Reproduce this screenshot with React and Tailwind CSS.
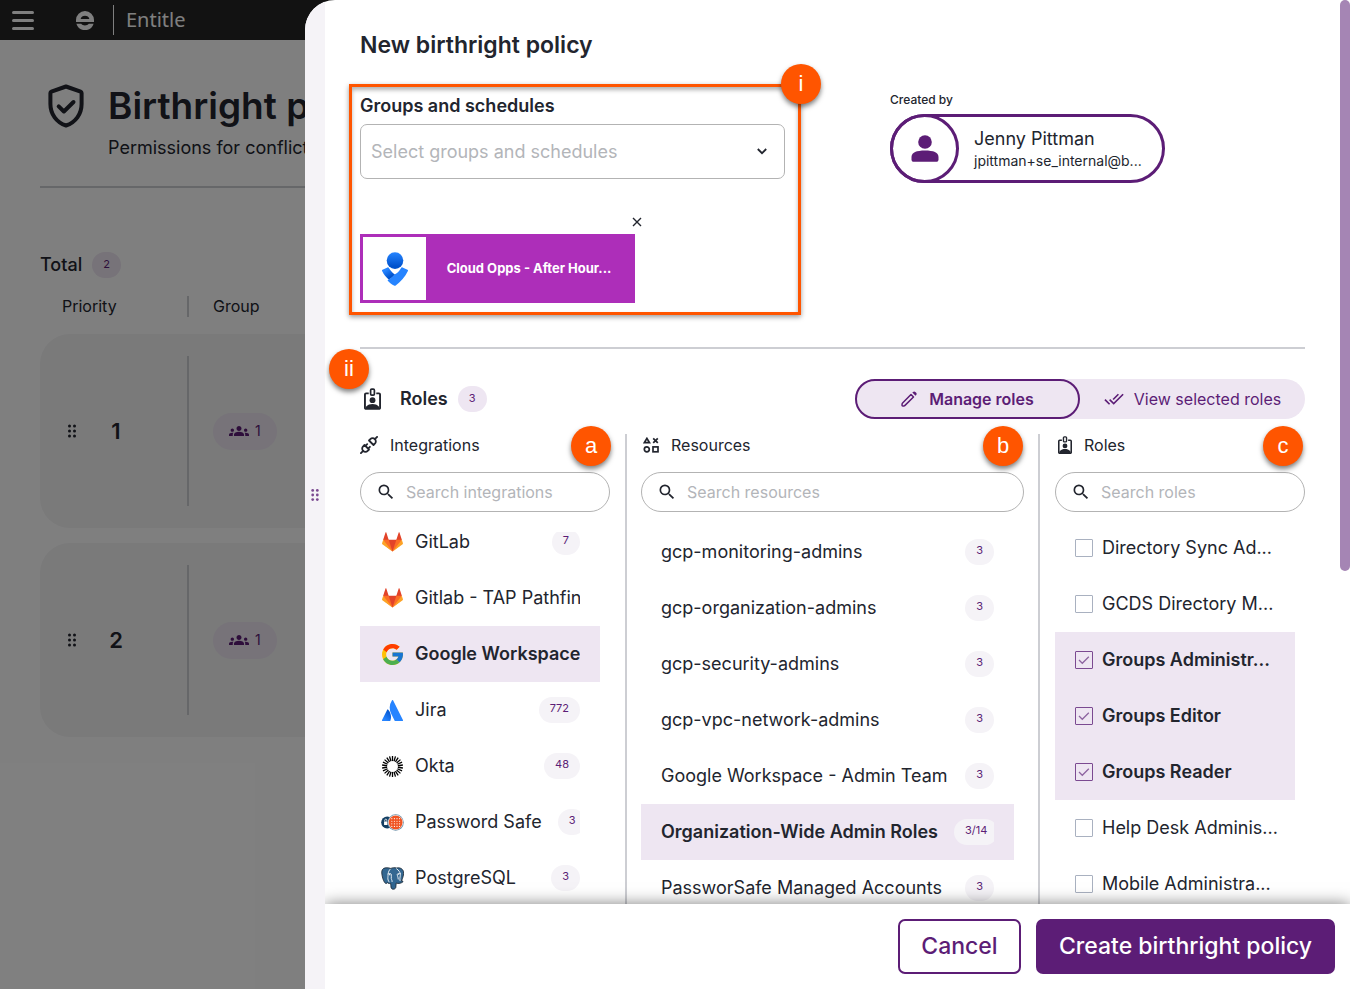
import { useState } from 'react';
import clsx from 'clsx';
import { MdDoneAll, MdGroups, MdSearch } from 'react-icons/md';
import { FcGoogle } from 'react-icons/fc';

const integrations = [
  { name: 'GitLab', count: '7', icon: GitlabLogo },
  { name: 'Gitlab - TAP Pathfin', icon: GitlabLogo },
  { name: 'Google Workspace', icon: GoogleLogo, active: true },
  { name: 'Jira', count: '772', icon: AtlassianLogo },
  { name: 'Okta', count: '48', icon: OktaLogo },
  { name: 'Password Safe', count: '3', icon: PasswordSafeLogo },
  { name: 'PostgreSQL', count: '3', icon: PostgresLogo }
];

const resources = [
  { name: 'gcp-monitoring-admins', count: '3' },
  { name: 'gcp-organization-admins', count: '3' },
  { name: 'gcp-security-admins', count: '3' },
  { name: 'gcp-vpc-network-admins', count: '3' },
  { name: 'Google Workspace - Admin Team', count: '3' },
  { name: 'Organization-Wide Admin Roles', count: '3/14', active: true },
  { name: 'PassworSafe Managed Accounts', count: '3' }
];

const roleNames = [
  'Directory Sync Ad...',
  'GCDS Directory M...',
  'Groups Administr...',
  'Groups Editor',
  'Groups Reader',
  'Help Desk Adminis...',
  'Mobile Administra...'
];

function GitlabLogo() {
  return (
    <svg viewBox="0 1 36 34" className="h-[20px] w-[21px] shrink-0">
      <path fill="#e24329" d="M2 14l9.38 9v-9l-4-12.28c-.205-.632-1.176-.632-1.38 0z" />
      <path fill="#e24329" d="M34 14l-9.38 9v-9l4-12.28c.205-.632 1.176-.632 1.38 0z" />
      <path fill="#e24329" d="M18 34.38L3 14h30z" />
      <path fill="#fc6d26" d="M18 34.38L11.38 14H2l4 11z" />
      <path fill="#fc6d26" d="M18 34.38L24.62 14H34l-4 11z" />
      <path fill="#fca326" d="M2 14L.1 20.16c-.18.565 0 1.2.5 1.56l17.42 12.66z" />
      <path fill="#fca326" d="M34 14l1.9 6.16c.18.565 0 1.2-.5 1.56L18 34.38z" />
    </svg>
  );
}

function GoogleLogo() {
  return <FcGoogle viewBox="4 4 40 40" className="size-[21px] shrink-0" />;
}

function AtlassianLogo() {
  return (
    <svg viewBox="0 0 24 24" className="size-[21px] shrink-0">
      <defs>
        <linearGradient id="atl" x1="0.9" y1="0.1" x2="0.3" y2="1">
          <stop offset="0" stopColor="#0052cc" />
          <stop offset="0.9" stopColor="#2684ff" />
        </linearGradient>
      </defs>
      <path
        fill="url(#atl)"
        d="M7.12 11.084a.683.683 0 00-1.16.126L.075 22.974a.703.703 0 00.63 1.018h8.19a.678.678 0 00.63-.39c1.767-3.65.696-9.203-2.406-12.52z"
      />
      <path
        fill="#2684ff"
        d="M11.434.386a15.515 15.515 0 00-.906 15.317l3.95 7.9a.703.703 0 00.628.388h8.19a.703.703 0 00.63-1.017L12.63.38a.664.664 0 00-1.196.006z"
      />
    </svg>
  );
}

function OktaLogo() {
  const rays = Array.from({ length: 22 }, (_, i) => (i * 360) / 22);

  return (
    <svg viewBox="0 0 24 24" className="size-[21px] shrink-0" stroke="#000" strokeWidth="1.5">
      {rays.map((angle) => (
        <path key={angle} d="M12 0v5.800" transform={`rotate(${angle} 12 12)`} />
      ))}
    </svg>
  );
}

function PasswordSafeLogo() {
  return (
    <svg viewBox="0 0 24 24" className="size-[23px] -mx-px shrink-0">
      <circle cx="6.5" cy="12" r="6.3" fill="#143f63" />
      <rect x="3.2" y="11" width="3.6" height="3.6" rx="0.6" fill="#fff" />
      <path d="M3.9 11V9.600a1.100 1.100 0 0 1 2.200 0V11" fill="none" stroke="#fff" strokeWidth="0.800" />
      <circle cx="15.3" cy="12" r="8.5" fill="#6f93ab" />
      <circle cx="15.3" cy="12" r="7.7" fill="#fff" />
      <circle cx="15.3" cy="12" r="7.2" fill="#f05423" />
      {[8, 10.7, 13.4, 16.1].map((y) =>
        [11.3, 14, 16.7, 19.4].map((x) => <circle key={`${x}-${y}`} cx={x} cy={y} r="0.6" fill="#fff" />)
      )}
    </svg>
  );
}

function PostgresLogo() {
  return (
    <svg viewBox="0 0 24 24" className="size-[23px] -mx-px shrink-0">
      <path
        fill="#336791"
        stroke="#1d2a36"
        strokeWidth="0.9"
        strokeLinejoin="round"
        d="M4.5.9C1.700 1.300.6 3.400.8 6.300c.2 3.300 1.500 7.800 3 9.900 1 1.300 2.100 1.200 3 .2.400.700 1.500 1 3.300.7.300 1.300 0 3.300.5 4.700.7 1.900 4.100 1.900 4.800-.3.400-1.500.2-3.300.4-4.700 2.300.8 5.600.2 7.200-1.500.3-.5-.400-.800-1.700-.7 1.500-2.900 2.700-7.100 2.200-9.700C22.700 1.500 19.200.3 16.400 1.100 14.400.5 12 .6 10.300 1.500 8.700.9 6.600.6 4.500.9z"
      />
      <path
        fill="none"
        stroke="#fff"
        strokeWidth="0.9"
        strokeLinecap="round"
        d="M9.600 2.300C6.900 4.700 7.500 8.500 7.200 11.200c-.2 1.700.4 3.200 1.200 4.300M7.300 7.200c1-.5 2.800-.7 3.300.2.500 1.400-.1 3.200.1 4.600.2 1.200 1 1.700.9 3.200M16.300 1.800c2.400 1.700 3.800 4 3.900 5.700.1 2-.8 3.400-.4 6.700M20 6.800c-1.200-.3-2.700-.1-3 .8-.2 1.300 1 3 1 5"
      />
      <circle cx="9" cy="8" r="0.700" fill="#fff" />
      <circle cx="18.500" cy="7.800" r="0.600" fill="#fff" />
    </svg>
  );
}

function OpsgenieLogo() {
  return (
    <svg viewBox="0 0 26 34" className="h-[34px] w-[26px]">
      <defs>
        <linearGradient id="ogHead" x1="0" y1="0" x2="0" y2="1">
          <stop offset="0" stopColor="#2684ff" />
          <stop offset="0.85" stopColor="#0052cc" />
        </linearGradient>
        <linearGradient id="ogArm" x1="0" y1="0" x2="0.7" y2="1">
          <stop offset="0.300" stopColor="#2684ff" />
          <stop offset="0.8" stopColor="#0052cc" />
        </linearGradient>
      </defs>
      <path
        fill="url(#ogArm)"
        d="M.1 19.100c-.3-.6-.2-1 .4-1.300l5-2.300c.6-.3 1-.2 1.400.4 1.400 2.400 3.500 5 6.100 6.700-1.300 1.600-3.700 3.700-5.900 5.500C4 25.200 1.700 22.400.1 19.100z"
      />
      <path
        fill="#2684ff"
        d="M12.500 33.800c-2.800-1.500-5-3.300-7-5.400 2.500-1.600 5.200-3.600 7.500-6.100 3-1.700 4.700-4.100 6.100-6.400.4-.6.8-.7 1.400-.4l5 2.300c.6.300.7.7.4 1.300-2.800 5.700-7 11-12.500 14.600-.4.200-.6.200-.9.100z"
      />
      <circle cx="13" cy="8.600" r="8.300" fill="url(#ogHead)" />
    </svg>
  );
}

function RoleBadgeIcon({ className }) {
  return (
    <svg viewBox="0 0 18 23" className={className} fill="none" stroke="#22252e" strokeWidth="2">
      <path d="M5 5.500H2.200A1.200 1.200 0 0 0 1 6.700v14A1.200 1.200 0 0 0 2.200 22h13.600a1.200 1.200 0 0 0 1.200-1.300v-14a1.200 1.200 0 0 0-1.200-1.200H13" />
      <rect x="7" y="1" width="4" height="6.500" rx="1.200" strokeWidth="1.800" />
      <circle cx="9" cy="12.700" r="3.100" fill="#22252e" stroke="none" />
      <path d="M2 22v-2.400c2-2 4.500-2.800 7-2.800s5 .8 7 2.800V22z" fill="#22252e" stroke="none" />
    </svg>
  );
}

function PlugIcon() {
  return (
    <svg
      viewBox="2 2 20 20"
      className="size-[18px]"
      fill="none"
      stroke="#22252e"
      strokeWidth="2"
      strokeLinecap="round"
      strokeLinejoin="round"
    >
      <path d="M7 12l5 5l-1.500 1.500a3.536 3.536 0 1 1 -5 -5l1.500 -1.500z" />
      <path d="M17 12l-5 -5l1.500 -1.500a3.536 3.536 0 1 1 5 5l-1.500 1.500z" />
      <path d="M3 21l2.500 -2.500M18.500 5.500l2.500 -2.500M10 11l-2 2M13 14l-2 2" />
    </svg>
  );
}

function ShapesIcon() {
  return (
    <svg viewBox="0 0 16 16" className="size-[16px]" fill="none" stroke="#22252e" strokeWidth="1.700">
      <path d="M1.300 5.700L3.900 1.400L6.500 5.700z" />
      <path d="M10.200 1.300l4.600 4.600M14.800 1.300l-4.600 4.600" />
      <circle cx="3.800" cy="12.300" r="2.500" />
      <rect x="10" y="9.900" width="5" height="4.900" />
    </svg>
  );
}

function PencilIcon() {
  return (
    <svg viewBox="0 0 16 16" className="size-4" fill="none" stroke="#5c1d76" strokeWidth="1.500">
      <path
        d="M10 3.500L1.600 12c-.3.300-.5.700-.5 1.100l-.1 1.200c0 .4.300.7.700.7l1.200-.1c.4 0 .8-.2 1.100-.5L12.500 6z"
        strokeLinejoin="round"
      />
      <path d="M11.300 1.600l.7-.7c.7-.7 1.700-.7 2.300 0l.9.900c.6.600.6 1.600 0 2.300l-.7.700z" fill="#5c1d76" stroke="none" />
    </svg>
  );
}

function DragDots({ className }) {
  return (
    <svg viewBox="0 0 8 13" className={className} fill="currentColor">
      {[1.5, 6.5, 11.5].map((y) => (
        <g key={y}>
          <circle cx="1.500" cy={y} r="1.500" />
          <circle cx="6.500" cy={y} r="1.500" />
        </g>
      ))}
    </svg>
  );
}

// numbered callout bubble
function Callout({ className, children }) {
  return (
    <span
      className={clsx(
        'absolute z-10 flex size-10 items-center justify-center rounded-full bg-[#ff5500] font-[Liberation_Sans,sans-serif] text-[22px] leading-none text-white shadow-[0_3px_5px_rgba(0,0,0,0.5)]',
        className
      )}
    >
      {children}
    </span>
  );
}

function CountBadge({ className, children }) {
  return (
    <span
      className={clsx(
        'flex h-[26px] min-w-[28px] shrink-0 items-center justify-center rounded-full px-[11px] pb-[2px] text-[11px] text-[#5c1d76]',
        className
      )}
    >
      {children}
    </span>
  );
}

function SearchField({ id, placeholder }) {
  return (
    <div className="flex h-10 items-center gap-[10px] rounded-full border border-[#b3b3b3] px-[15px]">
      <label htmlFor={id} aria-label={placeholder}>
        <MdSearch className="size-5 text-[#22252e]" />
      </label>
      <input
        id={id}
        type="text"
        placeholder={placeholder}
        className="w-full min-w-0 bg-transparent text-base outline-none placeholder:text-[#b3b5b9]"
      />
    </div>
  );
}

function PolicyRow({ priority }) {
  return (
    <div className="flex h-[194px] items-stretch rounded-[30px] bg-[#f4f4f5] py-[22px]">
      <div className="flex w-[147px] items-center pl-7">
        <DragDots className="h-[14px] w-2" />
        <span className="w-20 text-center text-[22px] font-semibold">{priority}</span>
      </div>
      <div className="w-[2px] bg-[#cdced3]" />
      <div className="flex items-center pl-6">
        <span className="flex h-[37px] items-center gap-[6px] rounded-full bg-[#eee6f2] px-4 text-sm text-[#5c1d76]">
          <MdGroups className="size-5" />
          1
        </span>
      </div>
    </div>
  );
}

function PoliciesPage() {
  return (
    <div className="h-full bg-white text-[#22252e]">
      <header className="flex h-10 items-center bg-[#242424] pl-3">
        <button type="button" aria-label="Menu" className="flex w-[22px] flex-col gap-[5px]">
          <span className="h-[3px] w-full rounded-full bg-white" />
          <span className="h-[3px] w-full rounded-full bg-white" />
          <span className="h-[3px] w-full rounded-full bg-white" />
        </button>
        <svg viewBox="0 0 18 19" className="ml-[42px] mr-[19px] h-[19px] w-[18px]">
          <path
            fill="#fff"
            fillRule="evenodd"
            d="M0 11V9a9 9 0 0 1 18 0v2zM4.600 8h8.800a4.600 4.600 0 0 0-8.800 0z"
          />
          <path fill="#fff" d="M.4 12.800h4.800c1.600 2.200 5.800 2.200 7.600 0h4.800a9 9 0 0 1-17.200 0z" />
        </svg>
        <div className="h-[30px] w-px bg-white" />
        <span className="pl-3 font-[Noto_Sans,sans-serif] text-xl text-white">Entitle</span>
      </header>

      <div className="whitespace-nowrap pl-10 pt-10">
        <div className="flex items-start gap-6 border-b-2 border-[#cdced3] pb-[22px] pl-2">
          <svg
            viewBox="0 0 36 44"
            className="mt-1 h-11 w-9"
            fill="none"
            stroke="#22252e"
            strokeWidth="4"
            strokeLinecap="round"
            strokeLinejoin="round"
          >
            <path d="M18 2.500L3.400 7.700a1.500 1.500 0 0 0-1 1.400V20c0 10 6 18.500 15.600 21.500C27.600 38.500 33.600 30 33.600 20V9.100a1.500 1.500 0 0 0-1-1.400z" />
            <path d="M10.700 22.300l5.200 5.200L25.500 18" />
          </svg>
          <div>
            <h1 className="text-[37px] font-semibold leading-[52px]">Birthright p</h1>
            <p className="text-lg leading-8">Permissions for conflict</p>
          </div>
        </div>

        <div className="flex items-center gap-[10px] pt-16 text-lg leading-[26px] font-medium">
          Total
          <CountBadge className="bg-[#eee6f2] font-normal">2</CountBadge>
        </div>
        <div className="flex items-center py-4 text-base">
          <span className="w-[147px] pl-[22px]">Priority</span>
          <span className="h-[21px] w-[2px] bg-[#cdced3]" />
          <span className="pl-6">Group</span>
        </div>
        <div className="flex flex-col gap-[15px]">
          <PolicyRow priority="1" />
          <PolicyRow priority="2" />
        </div>
      </div>
    </div>
  );
}

function GroupsField() {
  return (
    <div className="relative w-[425px] shrink-0">
      <div className="pointer-events-none absolute -bottom-3 -left-[11px] -right-4 -top-[10px] border-[3px] border-[#ff5500] shadow-[0_2px_5px_rgba(0,0,0,0.4),inset_0_3px_4px_rgba(0,0,0,0.3)]" />
      <Callout className="-right-9 -top-[30px]">i</Callout>

      <label htmlFor="groups" className="block text-lg font-semibold leading-6">
        Groups and schedules
      </label>
      <div className="relative mt-[6px]">
        <select
          id="groups"
          defaultValue=""
          className="h-[55px] w-full appearance-none rounded-[7px] border border-[#b3b3b3] bg-white px-[10px] text-lg text-[#b3b5b9] outline-none"
        >
          <option value="">Select groups and schedules</option>
        </select>
        <svg
          viewBox="0 0 10 7"
          className="pointer-events-none absolute right-[18px] top-6 h-[7px] w-[10px]"
          fill="none"
          stroke="#22252e"
          strokeWidth="1.800"
        >
          <path d="M.8 1l4.200 4.200L9.200 1" />
        </svg>
      </div>

      <div className="mt-[38px] flex w-[282px] justify-end">
        <button type="button" aria-label="Remove group" className="flex h-[17px] items-start">
          <svg viewBox="0 0 10 10" className="size-[10px]" stroke="#22252e" strokeWidth="1.400">
            <path d="M1 1l8 8M9 1L1 9" />
          </svg>
        </button>
      </div>
      <div className="flex h-[69px] w-[275px] items-center border-[3px] border-[#ad2eb9] bg-[#ad2eb9]">
        <div className="flex size-[63px] shrink-0 items-center justify-center bg-white">
          <OpsgenieLogo />
        </div>
        <span className="flex-1 whitespace-nowrap text-center text-[13px] font-bold text-white">
          Cloud Opps - After Hour...
        </span>
      </div>
    </div>
  );
}

function CreatedBy() {
  return (
    <div className="w-[275px]">
      <p className="text-xs font-medium leading-4">Created by</p>
      <div className="mt-[6px] flex h-[69px] items-center rounded-full border-[3px] border-[#5c1d76]">
        <div className="-ml-[3px] flex size-[69px] shrink-0 items-center justify-center rounded-full border-[3px] border-[#5c1d76]">
          <svg viewBox="0 0 28 27" className="h-[27px] w-7" fill="#5c1d76">
            <circle cx="14" cy="7" r="6.800" />
            <path d="M.5 22c0-4.500 5-6.500 13.500-6.500s13.500 2 13.500 6.500v2.500c0 1.400-.9 2.300-2.300 2.300H2.800C1.400 26.800.5 25.900.5 24.500z" />
          </svg>
        </div>
        <div className="pl-[15px]">
          <p className="text-lg leading-6">Jenny Pittman</p>
          <p className="text-sm leading-5">jpittman+se_internal@b...</p>
        </div>
      </div>
    </div>
  );
}

function RolesPicker() {
  const [selected, setSelected] = useState(['Groups Administr...', 'Groups Editor', 'Groups Reader']);

  const toggle = (name) => {
    setSelected(selected.includes(name) ? selected.filter((n) => n !== name) : [...selected, name]);
  };

  return (
    <div className="mt-[15px] flex">
      <section className="relative w-[267px] shrink-0 border-r-2 border-[#cdced3] pr-[15px]">
        <h3 className="flex h-[22px] items-center gap-3 text-base">
          <PlugIcon />
          Integrations
        </h3>
        <Callout className="-top-2 right-[14px]">a</Callout>
        <div className="mt-4">
          <SearchField id="search-integrations" placeholder="Search integrations" />
        </div>
        <div className="mt-5 overflow-hidden">
          {/* list is scrolled down a little */}
          <ul className="-mt-[18px] w-60">
            {integrations.map(({ name, count, icon: Icon, active }) => (
              <li key={name} className={clsx('h-14 px-5', active && 'bg-[#eee6f2] font-semibold')}>
                <div className="flex h-full items-center overflow-hidden whitespace-nowrap pl-[2px] text-lg">
                  <Icon />
                  <span className="ml-3 mr-4">{name}</span>
                  {count && <CountBadge className="ml-auto bg-[#f5f3f7]">{count}</CountBadge>}
                </div>
              </li>
            ))}
          </ul>
        </div>
      </section>

      <section className="relative min-w-0 flex-1 border-r-2 border-[#cdced3] px-[14px]">
        <h3 className="flex h-[22px] items-center gap-3 pl-[2px] text-base">
          <ShapesIcon />
          Resources
        </h3>
        <Callout className="-top-2 right-[15px]">b</Callout>
        <div className="mt-4">
          <SearchField id="search-resources" placeholder="Search resources" />
        </div>
        <ul className="mr-[10px] mt-3">
          {resources.map(({ name, count, active }) => (
            <li key={name} className={clsx('h-14 px-5', active && 'bg-[#eee6f2] font-semibold')}>
              <div className="flex h-full items-center overflow-hidden whitespace-nowrap text-lg">
                <span className="mr-4">{name}</span>
                <CountBadge className="ml-auto bg-[#f5f3f7] font-normal">{count}</CountBadge>
              </div>
            </li>
          ))}
        </ul>
      </section>

      <section className="relative w-[265px] shrink-0 pl-[15px]">
        <h3 className="flex h-[22px] items-center gap-3 pl-[3px] text-base">
          <RoleBadgeIcon className="h-[18px] w-[14px]" />
          Roles
        </h3>
        <Callout className="-top-2 right-[2px]">c</Callout>
        <div className="mt-4">
          <SearchField id="search-roles" placeholder="Search roles" />
        </div>
        <ul className="mr-[10px] mt-2">
          {roleNames.map((name) => {
            const checked = selected.includes(name);
            return (
              <li key={name} className={clsx(checked && 'bg-[#eee6f2] font-semibold')}>
                <label className="flex h-14 items-center gap-[9px] whitespace-nowrap pl-5 text-lg">
                  <span className="relative flex size-[18px] shrink-0">
                    <input
                      type="checkbox"
                      checked={checked}
                      onChange={() => toggle(name)}
                      className="size-[18px] appearance-none rounded-[1px] border border-[#a9b1c0] checked:border-[#7b4a91]"
                    />
                    {checked && (
                      <svg
                        viewBox="0 0 18 18"
                        className="pointer-events-none absolute inset-0"
                        fill="none"
                        stroke="#8d64a0"
                        strokeWidth="1.300"
                      >
                        <path d="M4 9l3.300 3.300L13.800 5.800" />
                      </svg>
                    )}
                  </span>
                  {name}
                </label>
              </li>
            );
          })}
        </ul>
      </section>
    </div>
  );
}

export default function App() {
  return (
    <div className="relative h-screen overflow-hidden font-[Inter,sans-serif]">
      <PoliciesPage />
      <div className="absolute inset-0 bg-black/50" />

      <aside className="absolute inset-y-0 left-[305px] right-0 flex overflow-hidden rounded-tl-[30px] bg-white text-[#22252e]">
        <div className="flex w-5 shrink-0 items-center justify-center bg-[#f5f3f7] text-[#7b4a91]">
          <DragDots className="h-3 w-2" />
        </div>

        <div className="relative flex min-w-0 flex-1 flex-col overflow-hidden">
          <div className="min-h-0 flex-1 overflow-y-auto pl-[35px] pr-[45px] pt-[30px] [scrollbar-width:none]">
            <h2 className="text-[23px] font-semibold leading-[30px]">New birthright policy</h2>

            <div className="mt-[34px] flex gap-[105px] border-b-2 border-[#cdced3] pb-11">
              <GroupsField />
              <div className="-mt-[2px]">
                <CreatedBy />
              </div>
            </div>

            <div className="relative mt-[30px] flex items-center">
              <Callout className="-left-[31px] -top-[30px]">ii</Callout>
              <RoleBadgeIcon className="ml-1 h-[22px] w-[17px]" />
              <h3 className="ml-[19px] mr-[10px] text-lg font-semibold">Roles</h3>
              <CountBadge className="bg-[#eee6f2]">3</CountBadge>
              <div className="ml-auto flex h-10 w-[450px] rounded-full bg-[#eee6f2] text-base text-[#5c1d76]">
                <button
                  type="button"
                  className="flex w-1/2 items-center justify-center gap-3 rounded-full border-2 border-[#5c1d76] font-semibold"
                >
                  <PencilIcon />
                  Manage roles
                </button>
                <button type="button" className="flex w-1/2 items-center justify-center gap-[10px]">
                  <MdDoneAll className="size-5" />
                  View selected roles
                </button>
              </div>
            </div>

            <RolesPicker />
          </div>

          <div className="absolute right-0 top-0 h-[571px] w-[10px] rounded-full bg-[#a585b4]" />

          <footer className="relative z-20 flex h-[85px] shrink-0 justify-end gap-[15px] bg-white p-[15px] text-[23px] font-medium shadow-[0_0_15px_rgba(0,0,0,0.5)]">
            <button type="button" className="h-[55px] w-[123px] rounded-[7px] border-2 border-[#5c1d76] text-[#5c1d76]">
              Cancel
            </button>
            <button type="button" className="h-[55px] w-[299px] rounded-[7px] bg-[#5c1d76] text-white">
              Create birthright policy
            </button>
          </footer>
        </div>
      </aside>
    </div>
  );
}
